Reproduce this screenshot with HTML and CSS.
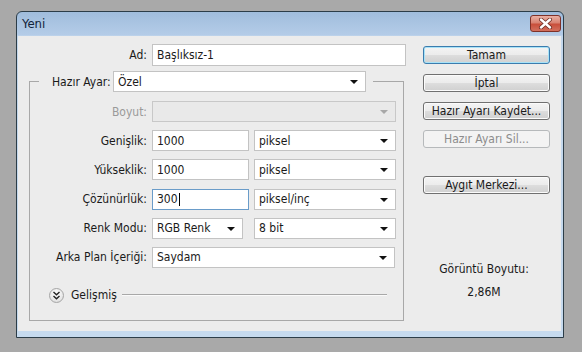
FILE: index.html
```html
<!DOCTYPE html>
<html>
	<head>
		<meta charset="UTF-8">
		<title>Yeni</title>
		<link rel="stylesheet" href="styles.css">
	</head>
	<body>
		<div class="window">
			<div class="titlebar">
				<span class="title">Yeni</span>
				<span class="close">
					<svg width="15" height="11" viewBox="0 0 15 11">
						<path d="M3 1.5 L12 9.5 M12 1.5 L3 9.5" stroke="#6b2a22" stroke-width="4" stroke-linecap="round"/>
						<path d="M3 1.5 L12 9.5 M12 1.5 L3 9.5" stroke="#fff" stroke-width="2.4" stroke-linecap="round"/>
					</svg>
				</span>
			</div>
			<div class="client">
				<div class="form">
					<div class="name-row">
						<span class="lbl">Ad:</span>
						<div class="field text ad">Başlıksız-1</div>
					</div>
					<fieldset class="preset">
						<legend>
							<span class="legend-lbl">Hazır Ayar:</span>
							<div class="field combo preset-combo">Özel<i class="arrow"></i></div>
						</legend>
						<div class="rows">
							<div class="row">
								<span class="lbl off">Boyut:</span>
								<div class="field combo disabled full"><i class="arrow"></i></div>
							</div>
							<div class="row">
								<span class="lbl">Genişlik:</span>
								<div class="field text num">1000</div>
								<div class="field combo unit">piksel<i class="arrow"></i></div>
							</div>
							<div class="row">
								<span class="lbl">Yükseklik:</span>
								<div class="field text num">1000</div>
								<div class="field combo unit">piksel<i class="arrow"></i></div>
							</div>
							<div class="row">
								<span class="lbl">Çözünürlük:</span>
								<div class="field text num focus">300<i class="caret"></i></div>
								<div class="field combo unit">piksel/inç<i class="arrow"></i></div>
							</div>
							<div class="row">
								<span class="lbl">Renk Modu:</span>
								<div class="field combo mode">RGB Renk<i class="arrow"></i></div>
								<div class="field combo unit bits">8 bit<i class="arrow"></i></div>
							</div>
							<div class="row">
								<span class="lbl">Arka Plan İçeriği:</span>
								<div class="field combo bg">Saydam<i class="arrow"></i></div>
							</div>
						</div>
						<div class="advanced">
							<span class="adv-btn">
								<svg width="9" height="9" viewBox="0 0 9 9">
									<path d="M1.5 1 L4.5 3.8 L7.5 1 M1.5 5 L4.5 7.8 L7.5 5" fill="none" stroke="#222" stroke-width="1.4"/>
								</svg>
							</span>
							<span class="adv-text">Gelişmiş</span>
							<span class="rule"></span>
						</div>
					</fieldset>
				</div>
				<div class="side">
					<div class="btn default">Tamam</div>
					<div class="btn">İptal</div>
					<div class="btn">Hazır Ayarı Kaydet...</div>
					<div class="btn off sil">Hazır Ayarı Sil...</div>
					<div class="btn">Aygıt Merkezi...</div>
					<div class="info">
						<div>Görüntü Boyutu:</div>
						<div class="size">2,86M</div>
					</div>
				</div>
			</div>
		</div>
	</body>
</html>
```

FILE: styles.css
```css
body{
	margin:0;
	padding:11px 0 0 16px;
	background:#a9a9a9;
	font-family:"DejaVu Sans Condensed","DejaVu Sans",sans-serif;
	font-stretch:condensed;
	font-size:12px;
	color:#1a1a1a;
}
.window{
	width:548px;
	height:327px;
	box-sizing:border-box;
	border:1px solid #2c3d48;
	border-radius:6px 6px 0 0;
	background:linear-gradient(#a0bddc,#b4cce8 23px,#c3d7ec 24px,#c6daee);
	display:flex;
	flex-direction:column;
}
.titlebar{
	height:24px;
	display:flex;
	justify-content:space-between;
	align-items:flex-start;
}
.title{
	padding:4px 0 0 5px;
	font-size:13px;
	color:#12233a;
}
.close{
	margin:3px 2px 0 0;
	width:31px;
	height:17px;
	box-sizing:border-box;
	border:1px solid #7e3128;
	border-radius:3px;
	background:linear-gradient(#eab0a4,#d98372 45%,#c94f3b 55%,#d2705e);
	display:flex;
	align-items:center;
	justify-content:center;
}
.client{
	margin:0 2px 0 1px;
	height:295px;
	background:#ececec;
	display:flex;
}
.form{
	width:390px;
	padding:8px 0 0 11px;
	box-sizing:border-box;
}
.name-row{
	display:flex;
	align-items:center;
}
.name-row .lbl{
	width:118px;
}
.lbl{
	width:117px;
	padding-right:5px;
	text-align:right;
	flex:none;
}
.lbl.off{
	color:#9a9a9a;
}
.field{
	box-sizing:border-box;
	height:21px;
	border:1px solid #c3c3c3;
	background:#fff;
	padding:0 0 0 4px;
	display:flex;
	align-items:center;
	position:relative;
	flex:none;
}
.field.ad{
	width:254px;
	height:22px;
}
.combo .arrow{
	position:absolute;
	right:7px;
	top:8px;
	border-left:4px solid transparent;
	border-right:4px solid transparent;
	border-top:4px solid #111;
}
.combo.disabled{
	background:#e9e9e9;
	border-color:#c8c8c8;
}
.combo.disabled .arrow{
	border-top-color:#a8a8a8;
}
.preset{
	margin:5px 0 0 0;
	width:375px;
	box-sizing:border-box;
	border:1px solid #a8a8a8;
	padding:9px 0 17px 0;
	min-width:0;
}
.preset legend{
	margin-left:9px;
	padding:0 7px 0 13px;
	display:flex;
	align-items:center;
}
.legend-lbl{
	width:61px;
}
.preset-combo{
	width:253px;
}
.rows{
	display:flex;
	flex-direction:column;
	gap:8.2px;
}
.row{
	display:flex;
	align-items:center;
}
.full{
	width:244px;
}
.num{
	width:97px;
	margin-right:5px;
}
.unit{
	width:142px;
}
.mode{
	width:91px;
	margin-right:11px;
}
.bg{
	width:243px;
}
.focus{
	border-color:#6a9cc9;
}
.caret{
	display:inline-block;
	width:1px;
	height:13px;
	background:#000;
	margin-left:1px;
}
.advanced{
	margin-top:20px;
	padding:0 16px 0 19px;
	height:15px;
	display:flex;
	align-items:center;
}
.adv-btn{
	width:15px;
	height:15px;
	box-sizing:border-box;
	border:1px solid #a6a6a6;
	border-radius:50%;
	background:radial-gradient(circle at 50% 35%,#ffffff,#e4e4e4 70%,#d2d2d2);
	display:flex;
	align-items:center;
	justify-content:center;
	flex:none;
}
.adv-text{
	margin:0 5px 0 7px;
}
.rule{
	flex:1;
	height:1px;
	background:#a8a8a8;
	border-bottom:1px solid #fafafa;
}
.side{
	padding:10px 0 0 15px;
}
.btn{
	width:127px;
	height:18px;
	box-sizing:border-box;
	border:1px solid #707070;
	border-radius:3px;
	background:linear-gradient(#f4f4f4,#ececec 48%,#dddddd 52%,#d0d0d0);
	box-shadow:inset 0 0 0 1px #fbfbfb;
	text-align:center;
	line-height:16px;
	margin-bottom:10px;
}
.btn.default{
	border-color:#3a7cae;
	box-shadow:inset 0 0 0 1px #a8e2f7;
}
.btn.off{
	border-color:#b6b9bb;
	background:#f3f3f3;
	box-shadow:none;
	color:#8c8c8c;
}
.btn.sil{
	margin-bottom:28px;
}
.info{
	width:122px;
	margin-top:68px;
	text-align:center;
	line-height:15px;
}
.info .size{
	margin-top:8px;
}
```
